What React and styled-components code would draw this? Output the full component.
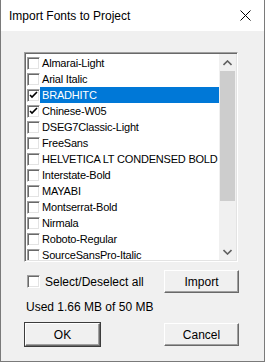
import React from 'react';
import styled, { createGlobalStyle } from 'styled-components';

const GlobalStyle = createGlobalStyle`
  html, body {
    margin: 0;
    padding: 0;
    background: #f0f0f0;
  }
  * {
    box-sizing: border-box;
  }
`

const Window = styled.div`
  width: 265px;
  height: 362px;
  display: flex;
  flex-direction: column;
  background: #f0f0f0;
  border: 1px solid #7a7a7a;
  border-top: none;
  font-family: "Liberation Sans", Arial, sans-serif;
  font-size: 12px;
  color: #000;
`

const TitleBar = styled.div`
  height: 31px;
  flex: none;
  display: flex;
  align-items: center;
  justify-content: space-between;
  background: #fff;
  padding: 0 13px 0 8px;
`

const Title = styled.span`
  font-size: 12px;
  color: #000;
`

const Body = styled.div`
  display: flex;
  flex-direction: column;
  padding: 21px 25px 0 23px;
`

const ListBox = styled.div`
  width: 214px;
  height: 210px;
  display: flex;
  background: #fff;
  border-top: 1px solid #a0a0a0;
  border-left: 1px solid #a0a0a0;
  border-bottom: 1px solid #fff;
  border-right: 1px solid #fff;
  box-shadow: inset 1px 1px 0 #696969, inset -1px -1px 0 #e3e3e3;
  padding: 1px;
  overflow: hidden;
`

const Items = styled.div`
  flex: 1;
  display: flex;
  flex-direction: column;
  padding-top: 1px;
  overflow: hidden;
  font-size: 11px;
  letter-spacing: -0.2px;
`

const Row = styled.div`
  height: 16px;
  flex: none;
  display: flex;
  align-items: center;
  padding-left: 1px;
`

const Label = styled.span`
  flex: 1;
  height: 16px;
  line-height: 16px;
  padding-left: 2px;
  white-space: nowrap;
  overflow: hidden;
  background: ${p => (p.$selected ? '#0078d7' : 'transparent')};
  color: ${p => (p.$selected ? '#fff' : '#000')};
`

const Box = styled.span`
  width: 13px;
  height: 13px;
  flex: none;
  display: inline-flex;
  align-items: center;
  justify-content: center;
  background: #fff;
  border-top: 1px solid #a0a0a0;
  border-left: 1px solid #a0a0a0;
  border-bottom: 1px solid #fff;
  border-right: 1px solid #fff;
  box-shadow: inset 1px 1px 0 #696969, inset -1px -1px 0 #e3e3e3;
`

const ScrollBar = styled.div`
  width: 17px;
  flex: none;
  display: flex;
  flex-direction: column;
  background: #f0f0f0;
`

const Arrow = styled.div`
  height: 17px;
  flex: none;
  display: flex;
  align-items: center;
  justify-content: center;
`

const Track = styled.div`
  flex: 1;
  display: flex;
  flex-direction: column;
  padding: 0 1px;
`

const Thumb = styled.div`
  height: 130px;
  background: #cdcdcd;
`

const ControlsRow = styled.div`
  display: flex;
  align-items: center;
  justify-content: space-between;
  margin-top: 8px;
  height: 23px;
`

const CheckLabel = styled.label`
  display: flex;
  align-items: center;
  gap: 5px;
  padding-left: 3px;
`

const Button = styled.button`
  width: 75px;
  height: 23px;
  padding: 0;
  font-family: "Liberation Sans", Arial, sans-serif;
  font-size: 12px;
  color: #000;
  background: #f0f0f0;
  border-top: 1px solid #fff;
  border-left: 1px solid #fff;
  border-bottom: 1px solid #696969;
  border-right: 1px solid #696969;
  box-shadow: inset -1px -1px 0 #a0a0a0;
  outline: ${p => (p.$default ? '1px solid #3c3c3c' : 'none')};
  outline-offset: 0;
`

const Usage = styled.div`
  margin-top: 7px;
  padding-left: 2px;
  height: 14px;
  line-height: 14px;
`

const Footer = styled.div`
  display: flex;
  justify-content: space-between;
  margin-top: 9px;
  padding-left: 1px;
`

const fonts = [
  ['Almarai-Light', false],
  ['Arial Italic', false],
  ['BRADHITC', true],
  ['Chinese-W05', true],
  ['DSEG7Classic-Light', false],
  ['FreeSans', false],
  ['HELVETICA LT CONDENSED BOLD', false],
  ['Interstate-Bold', false],
  ['MAYABI', false],
  ['Montserrat-Bold', false],
  ['Nirmala', false],
  ['Roboto-Regular', false],
  ['SourceSansPro-Italic', false],
]

function Check({ checked }) {
  return (
    <Box>
      {checked && (
        <svg width="9" height="9" viewBox="0 0 9 9">
          <path d="M1 4 L3 6 L8 1" fill="none" stroke="#000" strokeWidth="1.6" />
        </svg>
      )}
    </Box>
  )
}

function App() {
  return (
    <>
      <GlobalStyle />
      <Window>
        <TitleBar>
          <Title>Import Fonts to Project</Title>
          <svg width="11" height="11" viewBox="0 0 11 11">
            <path d="M0.5 0.5 L10.5 10.5 M10.5 0.5 L0.5 10.5" stroke="#000" strokeWidth="1" />
          </svg>
        </TitleBar>
        <Body>
          <ListBox>
            <Items>
              {fonts.map(([name, checked], i) => (
                <Row key={name}>
                  <Check checked={checked} />
                  <Label $selected={i === 2}>{name}</Label>
                </Row>
              ))}
            </Items>
            <ScrollBar>
              <Arrow>
                <svg width="9" height="6" viewBox="0 0 9 6">
                  <path d="M0.5 5 L4.5 1 L8.5 5" fill="none" stroke="#606060" strokeWidth="1.6" />
                </svg>
              </Arrow>
              <Track>
                <Thumb />
              </Track>
              <Arrow>
                <svg width="9" height="6" viewBox="0 0 9 6">
                  <path d="M0.5 1 L4.5 5 L8.5 1" fill="none" stroke="#606060" strokeWidth="1.6" />
                </svg>
              </Arrow>
            </ScrollBar>
          </ListBox>
          <ControlsRow>
            <CheckLabel>
              <Check checked={false} />
              <span>Select/Deselect all</span>
            </CheckLabel>
            <Button>Import</Button>
          </ControlsRow>
          <Usage>Used 1.66 MB of 50 MB</Usage>
          <Footer>
            <Button $default>OK</Button>
            <Button>Cancel</Button>
          </Footer>
        </Body>
      </Window>
    </>
  )
}

export default App;
